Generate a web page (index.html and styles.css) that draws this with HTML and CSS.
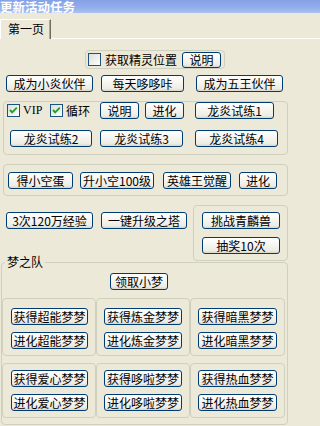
FILE: index.html
```html
<!DOCTYPE html>
<html>
<head>
<meta charset="utf-8">
<link rel="stylesheet" href="styles.css">
</head>
<body>
<div class="title"><span class="title-text">更新活动任务</span></div>
<div class="tabbar">
  <div class="tab">第一页</div>
  <div class="tabfill"></div>
</div>
<div class="panel">
  <div class="g1">
    <svg class="cb" width="13" height="13" viewBox="0 0 13 13"><defs><linearGradient id="cbg" x1="0" y1="0" x2="1" y2="1"><stop offset="0" stop-color="#dcdcd7"/><stop offset="1" stop-color="#ffffff"/></linearGradient></defs><rect x="0.5" y="0.5" width="12" height="12" fill="url(#cbg)" stroke="#1c5180"/></svg>
    <span class="lbl1">获取精灵位置</span>
    <button class="btn b-shuo1">说明</button>
  </div>

  <div class="row r2">
    <button class="btn w87 m6">成为小炎伙伴</button>
    <button class="btn w83 m8">每天哆哆咔</button>
    <button class="btn w87 m12">成为五王伙伴</button>
  </div>

  <div class="box g2">
    <div class="row ra">
      <svg class="cb m3" width="13" height="13" viewBox="0 0 13 13"><defs><linearGradient id="cbg2" x1="0" y1="0" x2="1" y2="1"><stop offset="0" stop-color="#dcdcd7"/><stop offset="1" stop-color="#ffffff"/></linearGradient></defs><rect x="0.5" y="0.5" width="12" height="12" fill="url(#cbg2)" stroke="#1c5180"/><path d="M3 6 L5.2 8.4 L9.8 3.6" fill="none" stroke="#21a121" stroke-width="1.9"/></svg>
      <span class="lbl lvip">VIP</span>
      <svg class="cb" width="13" height="13" viewBox="0 0 13 13"><rect x="0.5" y="0.5" width="12" height="12" fill="url(#cbg2)" stroke="#1c5180"/><path d="M3 6 L5.2 8.4 L9.8 3.6" fill="none" stroke="#21a121" stroke-width="1.9"/></svg>
      <span class="lbl lxh">循环</span>
      <button class="btn w39">说明</button>
      <button class="btn w39 m6">进化</button>
      <button class="btn w79 m11">龙炎试练1</button>
    </div>
    <div class="row rb">
      <button class="btn w82 m6">龙炎试练2</button>
      <button class="btn w83 m8">龙炎试练3</button>
      <button class="btn w83 m12">龙炎试练4</button>
    </div>
  </div>

  <div class="box g3">
    <button class="btn w65 m4">得小空蛋</button>
    <button class="btn w74 m7">升小空100级</button>
    <button class="btn w68 m9">英雄王觉醒</button>
    <button class="btn w38 m8">进化</button>
  </div>

  <div class="sec">
    <div class="secl">
      <button class="btn w87 m6">3次120万经验</button>
      <button class="btn w86 m8">一键升级之塔</button>
    </div>
    <div class="box secr">
      <button class="btn w78">挑战青麟兽</button>
      <button class="btn w78 gap8">抽奖10次</button>
    </div>
  </div>

  <div class="team">
    <span class="legend">梦之队</span>
    <button class="btn w58 lingqu">领取小梦</button>
    <div class="subrow s1">
      <div class="box sub sa"><button class="btn w77">获得超能梦梦</button><button class="btn w77 gap7">进化超能梦梦</button></div>
      <div class="box sub sb"><button class="btn w78">获得炼金梦梦</button><button class="btn w78 gap7">进化炼金梦梦</button></div>
      <div class="box sub sc"><button class="btn w79">获得暗黑梦梦</button><button class="btn w79 gap7">进化暗黑梦梦</button></div>
    </div>
    <div class="subrow s2">
      <div class="box sub sa"><button class="btn w77">获得爱心梦梦</button><button class="btn w77 gap7">进化爱心梦梦</button></div>
      <div class="box sub sb"><button class="btn w78">获得哆啦梦梦</button><button class="btn w78 gap7">进化哆啦梦梦</button></div>
      <div class="box sub sc"><button class="btn w79">获得热血梦梦</button><button class="btn w79 gap7">进化热血梦梦</button></div>
    </div>
  </div>
</div>
</body>
</html>
```

FILE: styles.css
```css
* { box-sizing: border-box; }
html {
  background: #ece9d8;
}
body {
  margin: 0;
  padding: 0;
  background: #ece9d8;
  font-family: "Noto Sans CJK SC", "DejaVu Sans", sans-serif;
  font-size: 12px;
  color: #000;
  height: 426px;
  overflow: hidden;
}
.title {
  height: 13px;
  display: flex;
  align-items: center;
  background: linear-gradient(to bottom, #86a2e6 0%, #93aeeb 60%, #aac1f1 100%);
  white-space: nowrap;
}
.title-text {
  font-size: 12.5px;
  line-height: 13px;
  font-weight: bold;
  color: #fff;
}
.tabbar {
  display: flex;
  height: 26px;
}
.tab {
  margin-top: 6px;
  width: 51px;
  height: 20px;
  border-top: 1px solid #fff;
  border-left: 1px solid #fff;
  border-right: 1px solid #716f64;
  box-shadow: inset -1px 0 0 #aca899;
  padding-left: 7px;
  line-height: 17px;
}
.tabfill {
  flex: 1;
  border-bottom: 1px solid #fff;
}
.panel {
  display: flex;
  flex-direction: column;
  align-items: flex-start;
}
.row { display: flex; align-items: flex-start; }
.btn {
  font-family: inherit;
  font-size: 12px;
  height: 17px;
  line-height: 15px;
  padding: 0;
  margin: 0;
  border: 1px solid #003c74;
  border-radius: 3px;
  background: linear-gradient(to bottom, #ffffff 0%, #f6f5f0 45%, #ecebe4 85%, #d8d4c8 100%);
  color: #000;
  text-align: center;
  white-space: nowrap;
  overflow: hidden;
  flex: none;
}
.box {
  border: 1px solid #d0d0bf;
  border-radius: 4px;
}
.cb { flex: none; display: block; }

.w38 { width: 38px; } .w39 { width: 39px; } .w58 { width: 58px; }
.w65 { width: 65px; } .w68 { width: 68px; } .w74 { width: 74px; }
.w77 { width: 77px; } .w78 { width: 78px; } .w79 { width: 79px; }
.w82 { width: 82px; } .w83 { width: 83px; } .w86 { width: 86px; }
.w87 { width: 87px; }
.m3 { margin-left: 3px; } .m4 { margin-left: 4px; } .m6 { margin-left: 6px; }
.m7 { margin-left: 7px; } .m8 { margin-left: 8px; } .m9 { margin-left: 9px; }
.m11 { margin-left: 11px; } .m12 { margin-left: 12px; }
.gap7 { margin-top: 7px; } .gap8 { margin-top: 8px; }

.g1 {
  margin-top: 11px;
  margin-left: 85px;
  width: 140px;
  height: 19px;
  border: 1px solid #d0d0bf;
  border-radius: 4px;
  display: flex;
  align-items: center;
  padding: 0 3px 0 2px;
}
.lbl1 { margin-left: 4px; line-height: 15px; white-space: nowrap; }
.b-shuo1 { margin-left: auto; width: 39px; height: 16px; line-height: 14px; }

.r2 { margin-top: 6px; }

.g2 {
  margin-top: 9px;
  margin-left: 3px;
  width: 285px;
  height: 54px;
}
.ra { height: 17px; align-items: center; }
.lbl { line-height: 15px; white-space: nowrap; padding-left: 3px; flex: none; }
.lvip { width: 30px; font-family: "Liberation Serif", serif; font-size: 12px; }
.lxh { width: 37px; }
.rb { margin-top: 11px; }

.g3 {
  margin-top: 9px;
  margin-left: 3px;
  width: 285px;
  height: 32px;
  display: flex;
  align-items: flex-start;
  padding-top: 7px;
}

.sec {
  margin-top: 9px;
  height: 56px;
  display: flex;
  align-items: flex-start;
}
.secl { display: flex; margin-top: 7px; }
.secr {
  margin-left: 6px;
  width: 95px;
  height: 56px;
  display: flex;
  flex-direction: column;
  padding: 6px 0 0 8px;
}

.team {
  position: relative;
  margin-top: 1px;
  margin-left: 1px;
  width: 287px;
  height: 163px;
  border: 1px solid #d0d0bf;
  border-radius: 4px;
  display: flex;
  flex-direction: column;
  align-items: flex-start;
}
.legend {
  position: absolute;
  top: -9px;
  left: 3px;
  padding: 0 2px;
  background: #ece9d8;
  line-height: 16px;
}
.lingqu { margin-top: 10px; margin-left: 108px; }
.subrow { display: flex; }
.s1 { margin-top: 8px; height: 58px; }
.s2 { margin-top: 7px; height: 55px; }
.sub {
  height: 100%;
  display: flex;
  flex-direction: column;
  align-items: flex-start;
}
.sa { width: 94px; padding-left: 8px; }
.sb { width: 94px; padding-left: 7px; }
.sc { width: 95px; padding-left: 7px; }
.s1 .sub { padding-top: 9px; }
.s2 .sub { padding-top: 6px; }
```
